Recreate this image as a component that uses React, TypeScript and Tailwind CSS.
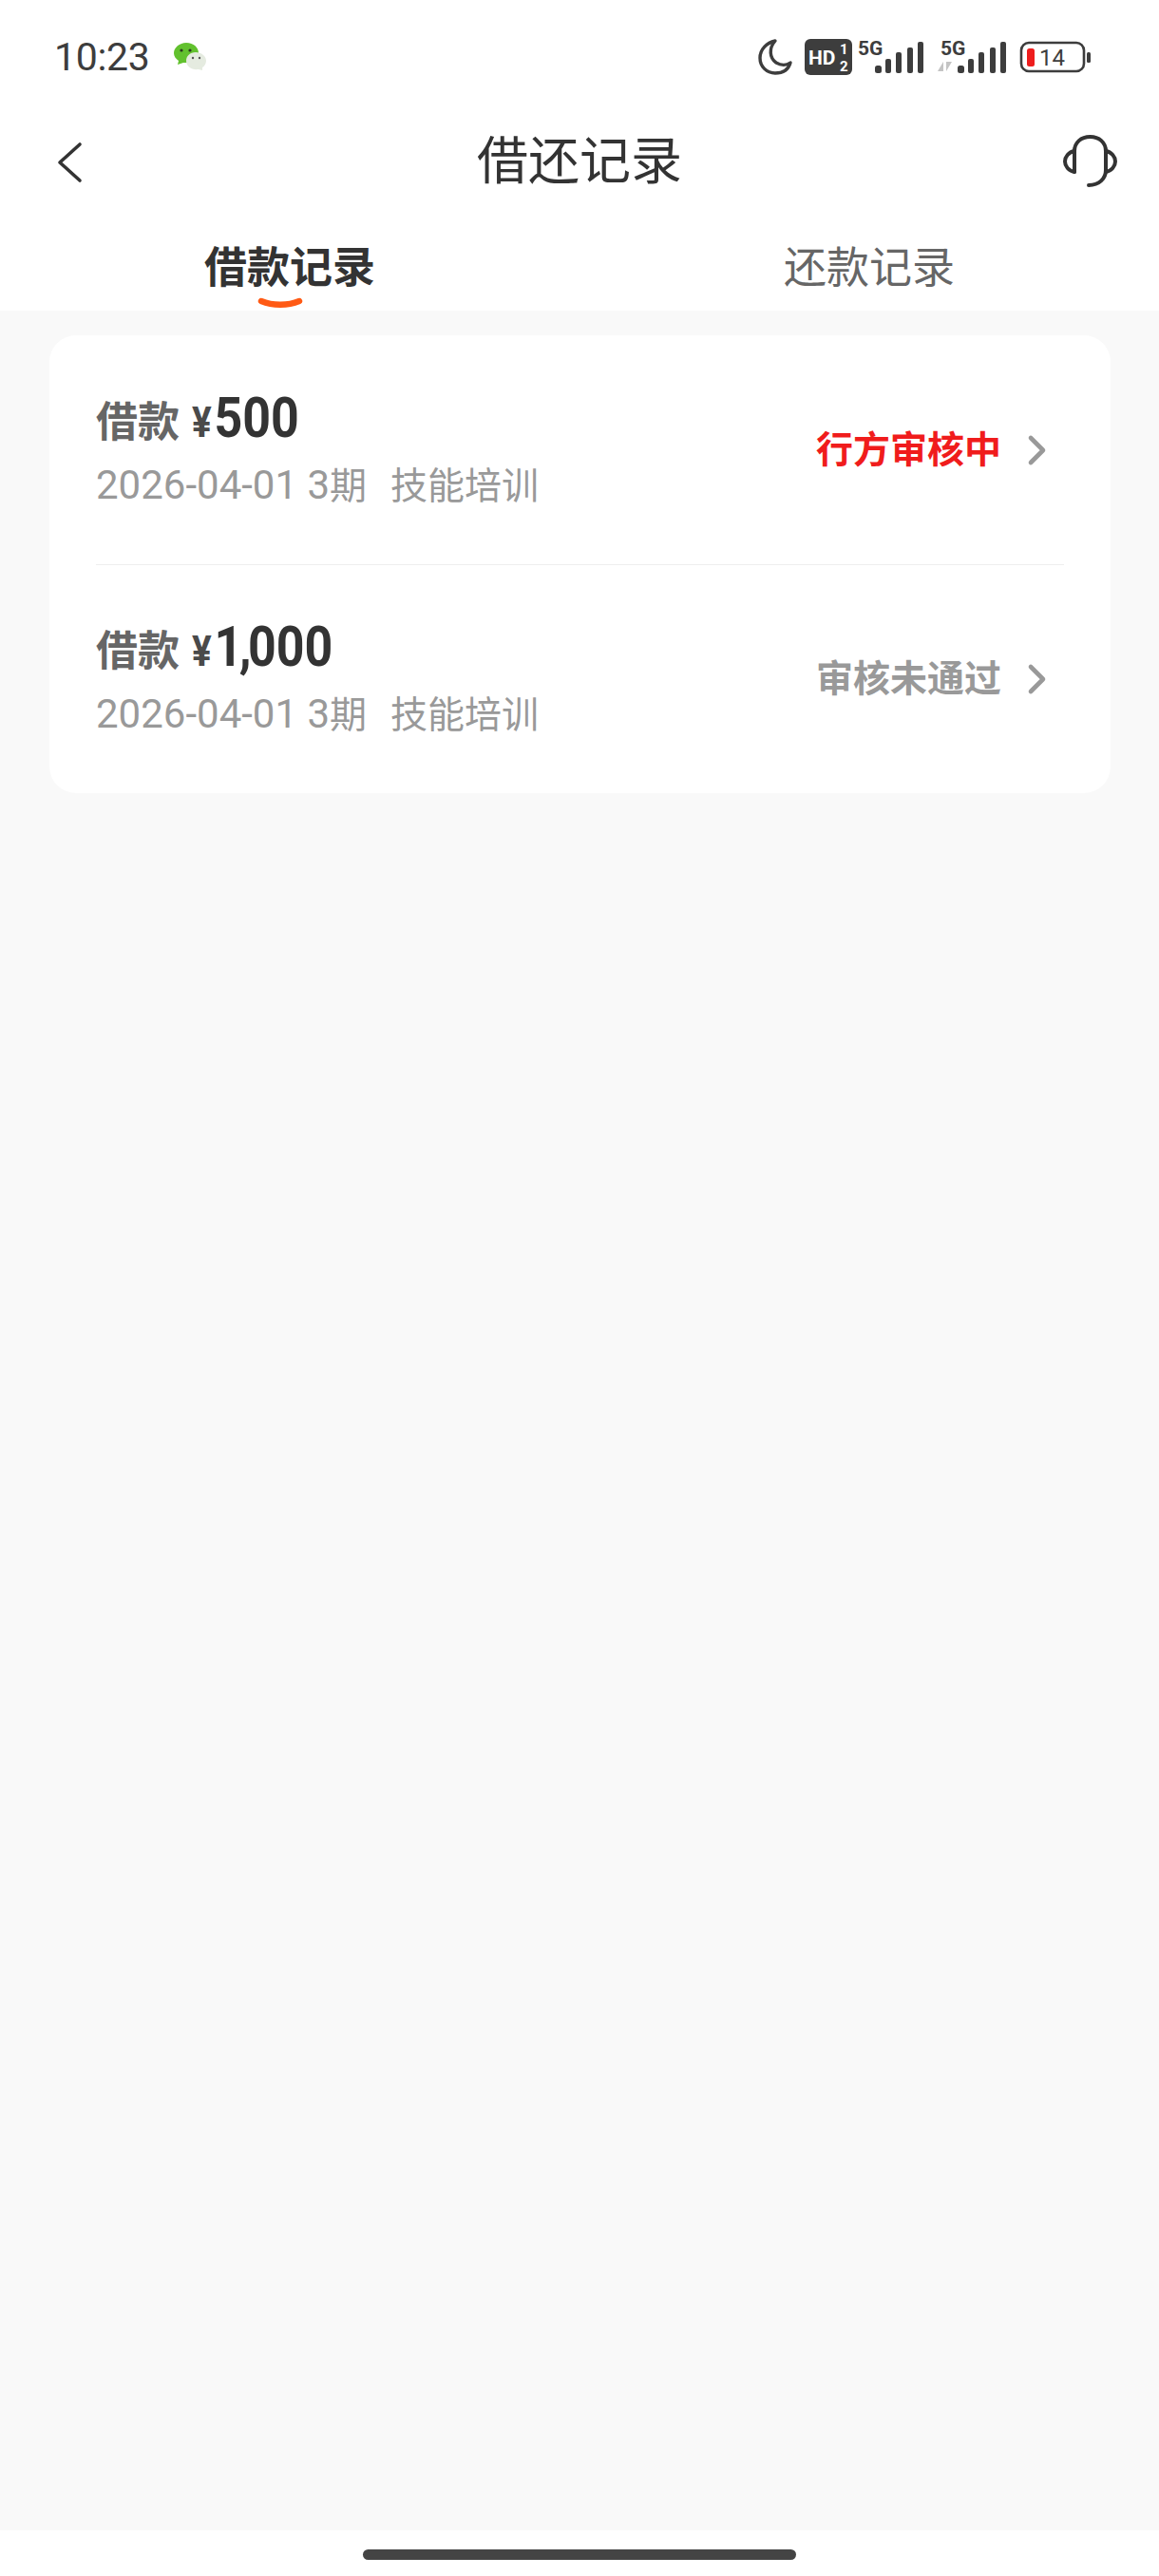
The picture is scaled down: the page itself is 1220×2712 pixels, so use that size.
import { Fragment } from 'react';

const cjk = "font-['Roboto','Noto_Sans_CJK_SC',sans-serif]";

interface LoanRecord {
    amount: string;
    status: string;
    statusClass: string;
}

const records: LoanRecord[] = [
    { amount: '500', status: '行方审核中', statusClass: 'text-[#f01c1c] font-semibold' },
    { amount: '1,000', status: '审核未通过', statusClass: 'text-[#999999] font-semibold' },
];

function Signal({ arrows }: { arrows?: boolean }) {
    return (
        <svg width={arrows ? 73 : 70} height="44" viewBox={arrows ? '-4 0 73 44' : '0 0 70 44'} fill="none">
            <text x="0" y="19.5" fontSize="21" fontWeight="700" fill="#3d3d3d" fontFamily="Roboto">5G</text>
            {arrows && (
                <g fill="#c4c4c4">
                    <path d="M3 27 L3 37 L-3 37 Z" />
                    <path d="M6 37 L6 27 L12 27 Z" />
                </g>
            )}
            <g fill="#3d3d3d">
                <rect x="18" y="31" width="7" height="8" rx="2.5" />
                <rect x="29" y="24" width="6" height="15" rx="2" />
                <rect x="40" y="17" width="6" height="22" rx="2" />
                <rect x="52" y="12" width="6" height="27" rx="2" />
                <rect x="63" y="6" width="6" height="33" rx="2" />
            </g>
        </svg>
    );
}

function StatusBar() {
    return (
        <div className="h-[118px] flex items-start justify-between pt-[36px] pl-[57px] pr-[71px]">
            <div className="flex items-center h-[48px]">
                <span className="text-[41px] leading-none text-[#3d3d3d] font-['Roboto',sans-serif] tracking-[-0.3px]">10:23</span>
                <svg className="ml-[25px]" width="34" height="30" viewBox="0 0 34 30">
                    <path d="M13 0 C21 0 26 5 26 11 C26 17 21 21 13 21 L10 21 L4 23 L5 19 C2 17 0 14 0 11 C0 5 6 0 13 0 Z" fill="#62c12e" />
                    <ellipse cx="8" cy="8" rx="1.6" ry="1.6" fill="#2a3a1e" />
                    <ellipse cx="17" cy="8" rx="1.6" ry="1.6" fill="#2a3a1e" />
                    <path d="M23 10 C29 10 34 14 34 19 C34 22 32 25 30 26 L30 29 L26 28 C19 29 13 25 13 19 C13 14 17 10 23 10 Z" fill="#e5ebe0" />
                    <circle cx="20" cy="16" r="1.2" fill="#555" />
                    <circle cx="27" cy="16" r="1.2" fill="#555" />
                </svg>
            </div>
            <div className="flex items-center h-[48px] font-['Roboto',sans-serif]">
                <svg width="38" height="40" viewBox="0 0 38 40" fill="none">
                    <path d="M19 3 C10 5 3 12 3 21 C3 30 10 37 19 37 C27 37 33 33 35 26 C31 29 25 29 20 26 C13 21 12 11 19 3 Z" stroke="#3d3d3d" strokeWidth="3.4" strokeLinejoin="round" />
                </svg>
                <svg className="ml-[12px]" width="50" height="38" viewBox="0 0 50 38">
                    <rect width="50" height="38" rx="6" fill="#3d3d3d" />
                    <text x="4" y="27" fontSize="21" fontWeight="700" fill="#fff" fontFamily="Roboto">HD</text>
                    <text x="37" y="16" fontSize="15" fontWeight="700" fill="#fff" fontFamily="Roboto">1</text>
                    <text x="37" y="34" fontSize="15" fontWeight="700" fill="#fff" fontFamily="Roboto">2</text>
                </svg>
                <div className="ml-[6px]"><Signal /></div>
                <div className="ml-[13px]"><Signal arrows /></div>
                <svg className="ml-[14px]" width="76" height="34" viewBox="0 0 76 34" fill="none">
                    <rect x="2" y="2" width="66" height="30" rx="8" stroke="#3d3d3d" strokeWidth="2.6" />
                    <rect x="8" y="8" width="8" height="19" rx="2.5" fill="#ee1d1d" />
                    <text x="21" y="26" fontSize="24" fill="#3d3d3d" fontFamily="Roboto">14</text>
                    <rect x="71" y="12" width="4" height="11" rx="1.5" fill="#3d3d3d" />
                </svg>
            </div>
        </div>
    );
}

function Header() {
    return (
        <div className="relative h-[104px] flex items-center justify-center">
            <svg className="absolute left-[58px] top-[29px]" width="32" height="48" viewBox="0 0 32 48" fill="none">
                <path d="M26 5 L5 24 L26 43" stroke="#333333" strokeWidth="3.6" strokeLinecap="round" strokeLinejoin="round" />
            </svg>
            <span className={`${cjk} text-[54px] leading-none text-[#333333] mt-[2px]`}>借还记录</span>
            <svg className="absolute left-[1118px] top-[23px]" width="60" height="58" viewBox="0 0 60 58" fill="none">
                <g stroke="#333333" strokeWidth="4" strokeLinecap="round" strokeLinejoin="round">
                    <path d="M13 40 L13 18 C13 9 20 3 29.5 3 C39 3 46 9 46 18 L46 38 C46 47 39 54 28 54" />
                    <path d="M13 18 C7 19 3 24 3 29 C3 34 7 39 13 40" />
                    <path d="M46 18 C52 19 56 24 56 29 C56 34 52 39 46 40" />
                </g>
            </svg>
        </div>
    );
}

function Tabs() {
    return (
        <div className="h-[105px] flex">
            <div className="relative w-[610px] flex justify-center pt-[33px]">
                <span className={`${cjk} text-[45px] leading-[56px] font-bold text-[#333333]`}>借款记录</span>
                <svg className="absolute left-[271px] top-[91px]" width="48" height="13" viewBox="0 0 48 13" fill="none">
                    <path d="M4 4 C16 9 32 9 44 4" stroke="#ff5a14" strokeWidth="6.5" strokeLinecap="round" />
                </svg>
            </div>
            <div className="w-[610px] flex justify-center pt-[33px]">
                <span className={`${cjk} text-[45px] leading-[56px] text-[#666666]`}>还款记录</span>
            </div>
        </div>
    );
}

function Chevron() {
    return (
        <svg className="ml-[26px]" width="24" height="36" viewBox="0 0 24 36" fill="none">
            <path d="M5 5 L18 18 L5 31" stroke="#999999" strokeWidth="4.6" strokeLinecap="round" strokeLinejoin="round" />
        </svg>
    );
}

function RecordRow({ record }: { record: LoanRecord }) {
    const parts = record.amount.split(',');
    return (
        <div className="h-[240px] flex items-center justify-between">
            <div>
                <div className="flex items-baseline h-[58px] font-bold -mt-[1px]">
                    <span className={`${cjk} text-[44px] leading-none text-[#666666]`}>借款</span>
                    {/* digits in the reference are a narrow DIN cut, Roboto squeezed to fit */}
                    <span className="ml-[13px] inline-block origin-left scale-x-[0.88] whitespace-nowrap font-['Roboto',sans-serif] leading-none">
                        <span className="text-[44px] text-[#4a4a4a]">¥</span>
                        <span className="ml-[3px] text-[59px] text-[#333333]">
                            {parts.map((p, i) => (
                                <Fragment key={p}>
                                    {i > 0 && <span className="-mx-[4px]">,</span>}
                                    {p}
                                </Fragment>
                            ))}
                        </span>
                    </span>
                </div>
                <div className={`${cjk} mt-[18px] text-[39px] leading-[50px] text-[#999999] whitespace-nowrap`}>
                    <span className="text-[42px]">2026-04-01 3</span>
                    <span>期</span>
                    <span className="ml-[25px]">技能培训</span>
                </div>
            </div>
            <div className="flex items-center pr-[16px]">
                <span className={`${cjk} text-[39px] leading-none ${record.statusClass}`}>{record.status}</span>
                <Chevron />
            </div>
        </div>
    );
}

export default function App() {
    return (
        <div className="w-[1220px] h-[2712px] flex flex-col bg-white overflow-hidden">
            <StatusBar />
            <Header />
            <Tabs />
            <div className="flex-1 bg-[#f9f9f9] px-[52px] pt-[26px]">
                <div className="w-[1117px] h-[482px] bg-white rounded-[28px] px-[49px] pt-[1px]">
                    {records.map((r, i) => (
                        <div key={r.amount} className={i === 0 ? 'border-b border-[#eeeeee]' : ''}>
                            <RecordRow record={r} />
                        </div>
                    ))}
                </div>
            </div>
            <div className="h-[48px] flex justify-center pt-[20px]">
                <div className="w-[456px] h-[11px] rounded-full bg-[#444444]" />
            </div>
        </div>
    );
}
